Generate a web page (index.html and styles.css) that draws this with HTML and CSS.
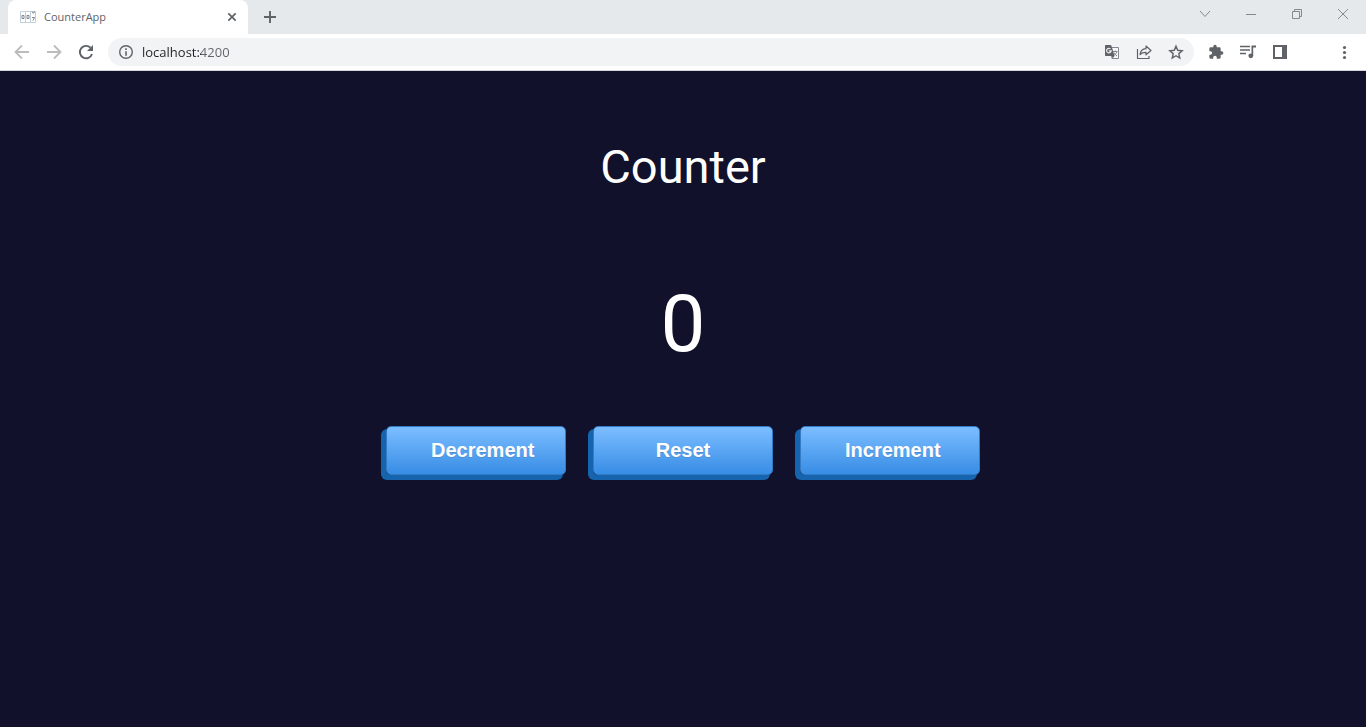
FILE: index.html
```html
<!DOCTYPE html>
<html lang="en">
<head>
<meta charset="utf-8">
<meta name="viewport" content="width=device-width, initial-scale=1">
<title>CounterApp</title>
<link rel="stylesheet" href="styles.css">
</head>
<body>
<header class="browser">
  <div class="tabstrip">
    <div class="tab">
      <svg class="favicon" width="16" height="16" viewBox="0 0 16 16" fill="none" aria-hidden="true">
        <path fill="#fff" stroke="#c3d0dc" d="M.5 2.500h5v11h-5zM5.500 2.500h5v11h-5zM10.500 2.500h5v11h-5z"/>
        <path stroke="#7c858e" d="M2 6.500h2v3h-2zM7 6.500h2v3h-2zM12 8.500h2.500l-1.500 3M12 2.500l1 1.500h1l.5-1.500"/>
      </svg>
      <span class="tab-title">CounterApp</span>
      <button class="icon-button" type="button" aria-label="Close tab">
        <svg width="16" height="16" viewBox="0 0 16 16" stroke="#5f6368" stroke-width="1.700" aria-hidden="true"><path d="M4.300 4.300l7.400 7.400M11.700 4.300l-7.400 7.400"/></svg>
      </button>
    </div>
    <button class="icon-button new-tab" type="button" aria-label="New tab">
      <svg width="16" height="16" viewBox="0 0 16 16" stroke="#5f6368" stroke-width="1.900" aria-hidden="true"><path d="M8 2v12M2 8h12"/></svg>
    </button>
    <div class="window-controls">
      <button class="icon-button" type="button" aria-label="Search tabs">
        <svg width="16" height="16" viewBox="0 0 16 16" fill="none" stroke="#85888c" aria-hidden="true"><path d="M3 5l5 5.500L13 5"/></svg>
      </button>
      <button class="icon-button" type="button" aria-label="Minimize">
        <svg width="16" height="16" viewBox="0 0 16 16" fill="none" stroke="#85888c" aria-hidden="true"><path d="M3 8.500h10"/></svg>
      </button>
      <button class="icon-button" type="button" aria-label="Restore">
        <svg width="16" height="16" viewBox="0 0 16 16" fill="none" stroke="#85888c" aria-hidden="true"><path d="M3.500 5.500h7v7h-7zM5.500 5V3.500h7v7H11"/></svg>
      </button>
      <button class="icon-button" type="button" aria-label="Close">
        <svg width="16" height="16" viewBox="0 0 16 16" fill="none" stroke="#85888c" aria-hidden="true"><path d="M3 3l10 10M13 3L3 13"/></svg>
      </button>
    </div>
  </div>
  <div class="toolbar">
    <button class="icon-button" type="button" aria-label="Back">
      <svg width="16" height="16" viewBox="0 0 16 16" fill="none" stroke="#babcbe" stroke-width="1.800" aria-hidden="true"><path d="M15 8H2M8 1.500L1.500 8 8 14.500"/></svg>
    </button>
    <button class="icon-button" type="button" aria-label="Forward">
      <svg width="16" height="16" viewBox="0 0 16 16" fill="none" stroke="#babcbe" stroke-width="1.800" aria-hidden="true"><path d="M1 8h13M8 1.500L14.500 8 8 14.500"/></svg>
    </button>
    <button class="icon-button" type="button" aria-label="Reload">
      <svg width="16" height="16" viewBox="0 0 16 16" aria-hidden="true"><path fill="none" stroke="#5f6368" stroke-width="1.900" d="M14 10A6.200 6.200 0 1 1 12.500 3.700"/><path fill="#5f6368" d="M15 1v6H9z"/></svg>
    </button>
    <div class="omnibox">
      <button class="icon-button" type="button" aria-label="Site information">
        <svg width="16" height="16" viewBox="0 0 16 16" aria-hidden="true"><circle cx="8" cy="8" r="6.300" fill="none" stroke="#5f6368" stroke-width="1.400"/><path fill="#5f6368" d="M7.200 4.300h1.600v1.700H7.200zM7.200 7.200h1.600v4.500H7.200z"/></svg>
      </button>
      <input class="address" type="text" value="localhost:4200" aria-label="Address">
      <button class="icon-button" type="button" aria-label="Translate this page">
        <svg width="16" height="16" viewBox="0 0 16 16" aria-hidden="true"><path fill="#f8f8f9" stroke="#85888c" d="M6 3.500h8.500v11H8z"/><path fill="#5f6368" d="M1.500 1H7l1 2.500L10.500 12 8.500 14.500 8 12H1.500L1 11.500v-10z"/><path fill="none" stroke="#f1f3f4" stroke-width="1.200" d="M6.500 4.900a2.300 2.300 0 1 0 .7 1.900H4.900"/><path fill="none" stroke="#85888c" d="M9 7.500h4.500M11.200 6.500v1M12.800 7.500c-.5 2-1.500 3.200-3 4M10 8.500c.6 1.500 1.700 2.500 3 3.500"/></svg>
      </button>
      <button class="icon-button" type="button" aria-label="Share">
        <svg width="16" height="16" viewBox="0 0 16 16" fill="none" stroke="#5f6368" stroke-width="1.200" aria-hidden="true"><path d="M1.500 5v9.500h11.500V12"/><path stroke-linejoin="round" d="M4 10.500C4.500 7 6.500 5 10 4.700V2l5 4.500-5 4.300V8.300C7.500 8.200 5.500 9 4 10.500z"/></svg>
      </button>
      <button class="icon-button" type="button" aria-label="Bookmark this tab">
        <svg width="16" height="16" viewBox="0 0 16 16" fill="none" stroke="#5f6368" stroke-width="1.400" aria-hidden="true"><path d="M8 2.200l1.700 4.100 4.500.4-3.400 2.900 1 4.400L8 11.700 4.200 14l1-4.400-3.400-2.900 4.500-.4z"/></svg>
      </button>
    </div>
    <div class="actions">
      <button class="icon-button" type="button" aria-label="Extensions">
        <svg width="16" height="16" viewBox="0 0 24 24" fill="#5f6368" aria-hidden="true"><path d="M20.500 11H19V7a2 2 0 0 0-2-2h-4V3.500a2.500 2.500 0 0 0-5 0V5H4a2 2 0 0 0-2 2v3.800h1.500a2.700 2.700 0 0 1 0 5.400H2V20a2 2 0 0 0 2 2h3.800v-1.500a2.700 2.700 0 0 1 5.400 0V22H17a2 2 0 0 0 2-2v-4h1.500a2.500 2.500 0 0 0 0-5z"/></svg>
      </button>
      <button class="icon-button" type="button" aria-label="Media controls">
        <svg width="16" height="16" viewBox="0 0 16 16" aria-hidden="true"><path stroke="#5f6368" stroke-width="1.500" d="M0 2.500h10M0 6h10M0 9.500h6"/><path fill="#5f6368" d="M11.500 1.500H16v2h-2.800V12h-1.700z"/><circle cx="10.800" cy="11.800" r="2.400" fill="#5f6368"/></svg>
      </button>
      <button class="icon-button" type="button" aria-label="Side panel">
        <svg width="16" height="16" viewBox="0 0 16 16" aria-hidden="true"><path fill="#5f6368" fill-rule="evenodd" d="M1 1h14v14H1zM3 3v10h7V3z"/></svg>
      </button>
    </div>
    <button class="icon-button" type="button" aria-label="Menu">
      <svg width="16" height="16" viewBox="0 0 16 16" fill="#5f6368" aria-hidden="true"><circle cx="8.500" cy="3.500" r="1.600"/><circle cx="8.500" cy="8.500" r="1.600"/><circle cx="8.500" cy="13.500" r="1.600"/></svg>
    </button>
  </div>
</header>
<main class="counter">
  <h1 class="counter-title">Counter</h1>
  <output class="counter-value">0</output>
  <div class="counter-buttons">
    <button class="counter-button" type="button">Decrement</button>
    <button class="counter-button" type="button">Reset</button>
    <button class="counter-button" type="button">Increment</button>
  </div>
</main>
</body>
</html>
```
FILE: styles.css
```css
* {
  box-sizing: border-box;
}

body {
  margin: 0;
  min-height: 100vh;
  display: flex;
  flex-direction: column;
  background: #11112b;
  font-family: Roboto, "Liberation Sans", sans-serif;
}

.browser {
  font-family: "Open Sans", "Noto Sans", sans-serif;
}

.icon-button {
  display: flex;
  flex: none;
  padding: 0;
  border: 0;
  background: none;
}

.tabstrip {
  display: flex;
  align-items: center;
  height: 34px;
  padding: 0 15px 0 8px;
  background: #e5e9ec;
}

.tab {
  display: flex;
  align-items: center;
  gap: 8px;
  width: 240px;
  height: 34px;
  padding: 0 8px 0 12px;
  border-radius: 8px 8px 0 0;
  background: #fff;
}

.tab-title {
  flex: 1;
  font-size: 11px;
  line-height: 16px;
  color: #5f6368;
}

.new-tab {
  margin-left: 14px;
}

.window-controls {
  display: flex;
  gap: 30px;
  height: 22px;
  align-self: flex-start;
  align-items: flex-end;
  margin-left: auto;
}

.toolbar {
  display: flex;
  align-items: center;
  gap: 16px;
  height: 37px;
  padding: 0 14px;
  border-bottom: 1px solid #d4d6da;
  background: #fff;
}

.omnibox {
  display: flex;
  flex: 1;
  align-items: center;
  gap: 16px;
  height: 28px;
  margin-left: -2px;
  padding: 0 10px;
  border-radius: 14px;
  background: #f1f3f4;
}

.address {
  flex: 1;
  min-width: 0;
  margin-left: -8px;
  padding: 0;
  border: 0;
  outline: 0;
  font: 13px/20px "Open Sans", "Noto Sans", sans-serif;
  color: #202124;
  background: linear-gradient(to right, #202124 59px, #5f6368 59px);
  background-clip: text;
  -webkit-background-clip: text;
  -webkit-text-fill-color: transparent;
}

.actions {
  display: flex;
  gap: 16px;
  margin: 0 32px 0 -2px;
}

.counter {
  display: flex;
  flex: 1;
  flex-direction: column;
  align-items: center;
  padding-top: 64px;
  color: #fff;
}

.counter-title {
  margin: 0;
  font-size: 47px;
  font-weight: 400;
  line-height: 64px;
}

.counter-value {
  margin-top: 77px;
  font-size: 80px;
  line-height: 96px;
}

.counter-buttons {
  display: flex;
  gap: 27px;
  margin-top: 54px;
}

.counter-button {
  width: 180px;
  padding: 12px 44px;
  border: 1px solid #337bc4;
  border-radius: 5px;
  background: linear-gradient(to bottom, #79bbff 5%, #378de5 100%);
  box-shadow: -4px 4px 0 1px #1564ad;
  font: bold 20px/23px "Liberation Sans", Arial, sans-serif;
  color: #fff;
  text-shadow: 0 1px 0 #528ecc;
}
```
